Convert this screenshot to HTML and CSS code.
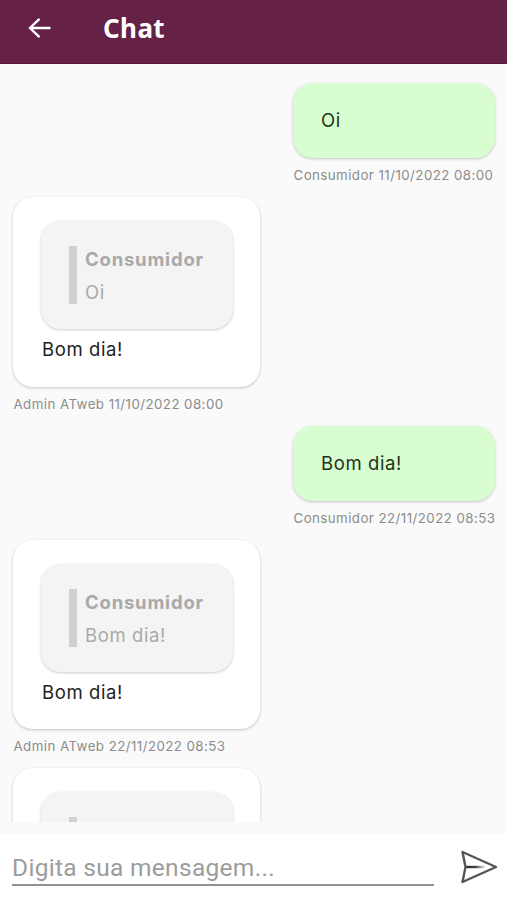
FILE: index.html
```html
<!DOCTYPE html>
<html lang="pt-BR">
<head>
    <meta charset="UTF-8">
    <meta name="viewport" content="width=device-width, initial-scale=1.0">
    <title>Chat</title>
    <link rel="stylesheet" href="styles.css">
</head>
<body>
    <header class="topbar">
        <button class="back-btn" aria-label="Voltar">
            <svg width="24" height="22" viewBox="0 0 24 22" fill="none" stroke="#fff" stroke-width="2.4">
                <path d="M22.500 11H2M11.500 1.800L2 11l9.500 9.200"/>
            </svg>
        </button>
        <h1>Chat</h1>
    </header>

    <main class="messages">
        <div class="message sent">
            <div class="bubble"><p>Oi</p></div>
            <span class="info">Consumidor 11/10/2022 08:00</span>
        </div>

        <div class="message received">
            <div class="bubble">
                <div class="quote">
                    <div class="quote-text">
                        <strong>Consumidor</strong>
                        <p>Oi</p>
                    </div>
                </div>
                <p>Bom dia!</p>
            </div>
            <span class="info">Admin ATweb 11/10/2022 08:00</span>
        </div>

        <div class="message sent">
            <div class="bubble"><p>Bom dia!</p></div>
            <span class="info">Consumidor 22/11/2022 08:53</span>
        </div>

        <div class="message received">
            <div class="bubble">
                <div class="quote">
                    <div class="quote-text">
                        <strong>Consumidor</strong>
                        <p>Bom dia!</p>
                    </div>
                </div>
                <p>Bom dia!</p>
            </div>
            <span class="info">Admin ATweb 22/11/2022 08:53</span>
        </div>

        <div class="message received">
            <div class="bubble">
                <div class="quote">
                    <div class="quote-text"></div>
                </div>
            </div>
        </div>
    </main>

    <form class="composer">
        <input type="text" placeholder="Digita sua mensagem...">
        <button class="send-btn" type="button" aria-label="Enviar">
            <svg width="38" height="34" viewBox="0 0 38 34" fill="none" stroke-linejoin="round">
                <defs>
                    <linearGradient id="fold" gradientUnits="userSpaceOnUse" x1="5" y1="0" x2="26" y2="0">
                        <stop offset="0" stop-color="#222"/>
                        <stop offset="0.5" stop-color="#444"/>
                        <stop offset="1" stop-color="#fff"/>
                    </linearGradient>
                </defs>
                <path d="M5 15.800h21v2.400H5z" fill="url(#fold)"/>
                <path d="M2.500 2L36 17 2.500 32 5.500 17z" stroke="#555" stroke-width="2.400"/>
            </svg>
        </button>
    </form>
</body>
</html>
```
FILE: styles.css
```css
* {
    margin: 0;
    padding: 0;
    box-sizing: border-box;
}

body {
    font-family: Inter, "Liberation Sans", sans-serif;
    display: flex;
    flex-direction: column;
    height: 100vh;
    overflow: hidden;
    background: #fafafa;
}

button {
    border: none;
    background: none;
    cursor: pointer;
}

svg {
    display: block;
}

.topbar {
    display: flex;
    align-items: center;
    flex: none;
    height: 64px;
    padding: 0 0 7px 28px;
    background: #662146;
    border-bottom: 1px solid #54183a;
}

.topbar h1 {
    margin-left: 51px;
    font-family: "Noto Sans", sans-serif;
    font-size: 26px;
    font-weight: 700;
    line-height: 36px;
    letter-spacing: 0.4px;
    color: #fff;
}

.messages {
    flex: 1;
    display: flex;
    flex-direction: column;
    padding: 19px 12px 0 13px;
    overflow: hidden;
}

.message {
    display: flex;
    flex-direction: column;
    flex: none;
    width: 247px;
}

.sent {
    align-self: flex-end;
    width: 202px;
}

.bubble {
    padding: 24px 28px;
    border-radius: 20px;
    background: #fff;
    box-shadow: 0 1px 3px rgba(0, 0, 0, 0.22);
    font-size: 18.5px;
    line-height: 27px;
    letter-spacing: 0.6px;
    color: #222;
}

.sent .bubble {
    background: #d7fdd1;
    color: #1d331b;
}

.received .bubble {
    height: 189.5px;
    padding-left: 29px;
}

.info {
    height: 39px;
    padding: 8px 0 0 0.5px;
    font-size: 13.3px;
    line-height: 18px;
    letter-spacing: 0.44px;
    white-space: nowrap;
    color: #8c8c8c;
}

.quote {
    height: 108px;
    margin: 0 -1px 7px;
    padding: 25px 28px;
    border-radius: 20px;
    background: #f4f4f4;
    box-shadow: 0 1px 3px rgba(0, 0, 0, 0.2);
}

.quote-text {
    height: 58px;
    padding-left: 8px;
    border-left: 8px solid #d0d0d0;
    color: #a9a9a9;
}

.quote-text strong {
    display: block;
    margin-bottom: 6px;
    font-weight: 700;
    letter-spacing: 0.8px;
}

.composer {
    display: flex;
    flex: none;
    height: 78px;
    padding: 12px 9px 0 12px;
    background: linear-gradient(#fafafa 12px, #fff 12px);
}

.composer input {
    width: 422px;
    height: 52px;
    padding-top: 17px;
    border: none;
    border-bottom: 2px solid #929292;
    outline: none;
    background: none;
    font-family: Roboto, sans-serif;
    font-size: 24.5px;
    letter-spacing: 0.3px;
    color: #222;
}

.composer input::placeholder {
    color: #9c9c9c;
}

.send-btn {
    margin: 16px 0 0 auto;
    height: 34px;
}
```
